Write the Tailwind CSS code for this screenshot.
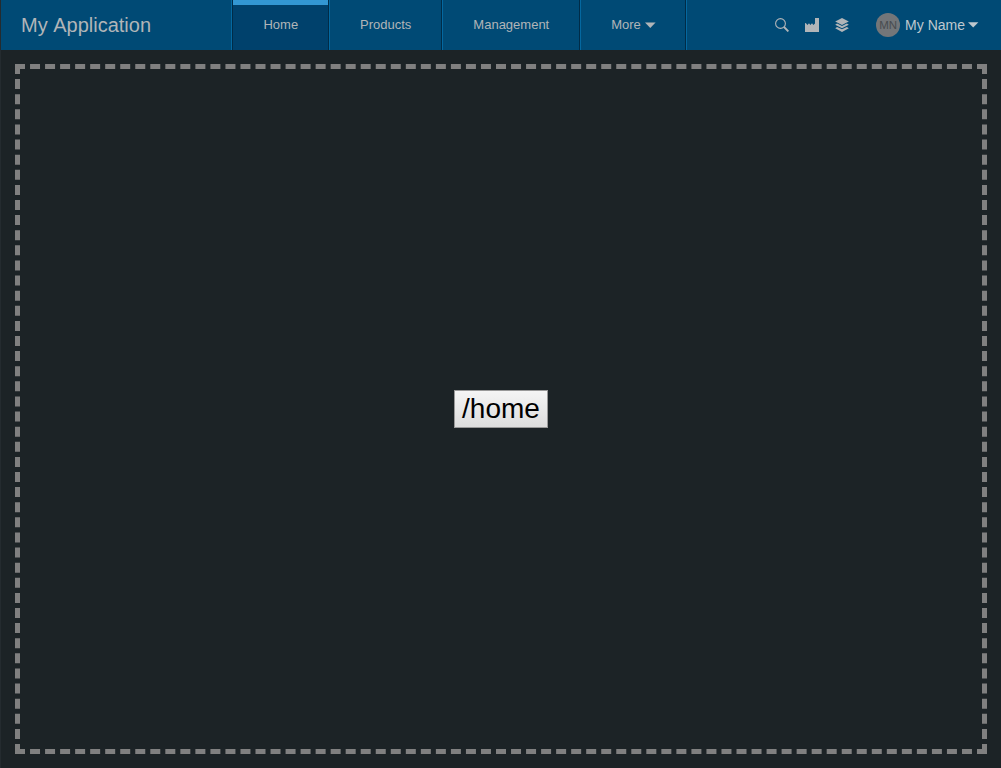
<!DOCTYPE html>
<html lang="en">
<head>
<meta charset="utf-8">
<title>My Application</title>
<script src="https://cdn.jsdelivr.net/npm/@tailwindcss/browser@4"></script>
</head>
<body class="h-screen overflow-hidden bg-[#1c2326] font-['Liberation_Sans',Arial,sans-serif] text-[#b1b5b8]">
<div class="flex h-screen flex-col border-l border-[#242b2f]">
  <header class="flex h-[50px] shrink-0 bg-[#004a75]">
    <div class="flex w-[230px] items-center pl-5 text-[20px] [font-kerning:none]">My Application</div>
    <nav class="flex border-r border-[#0468a0] text-[13px]">
      <a class="flex w-[98px] items-center justify-center border-x border-l-[#0468a0] border-r-[#002c48] bg-[#00416c] pl-[1.6px] shadow-[inset_1px_0_0_#002c48,inset_0_5px_0_#3397d3]">Home</a>
      <a class="flex w-[113px] items-center justify-center border-x border-l-[#0468a0] border-r-[#002c48] pl-[.4px]">Products</a>
      <a class="flex w-[138px] items-center justify-center border-x border-l-[#0468a0] border-r-[#002c48] pl-[.6px]">Management</a>
      <a class="flex w-[106px] items-center justify-center gap-1 border-x border-l-[#0468a0] border-r-[#002c48] pl-px">More
        <svg class="h-[6px] w-[11px]" viewBox="0 0 11 6" fill="currentColor"><path d="M0 .5h10.6L5.3 6z"/></svg>
      </a>
    </nav>
    <div class="ml-auto flex items-center pr-[22px]">
      <div class="mr-[27px] flex gap-4">
        <svg class="size-[14px]" viewBox="0 0 14 14" fill="none" stroke="currentColor"><circle cx="5.5" cy="5.5" r="4.9" stroke-width="1.1"/><path d="M9 9l4.4 4.4" stroke-width="1.9"/></svg>
        <svg class="size-[14px]" viewBox="0 0 14 14" fill="currentColor"><path d="M0 14V5l1 .2L2.4 7 4 5.2 5.4 7 7 5.2 8.4 7 10 5.6V0h4v14z"/></svg>
        <svg class="size-[14px]" viewBox="0 0 14 14" fill="currentColor"><path d="M7 0l6.8 3.5L7 7 .2 3.5z"/><path d="M2.1 5.4L7 7.9l4.9-2.5 1.9 1.4L7 10.3.2 6.8z"/><path d="M2.1 8.9L7 11.3l4.9-2.4 1.9 1.4L7 13.9.2 10.3z"/></svg>
      </div>
      <div class="flex items-center text-[14px] text-[#bfc8ce]">
        <span class="mr-[5px] flex size-6 items-center justify-center rounded-full bg-[#737679] pt-px text-[11.5px] text-[#484c4f]">MN</span>
        <span>My Name</span>
        <svg class="ml-[3px] h-[6px] w-[11px]" viewBox="0 0 11 6" fill="currentColor"><path d="M0 .2h10.4L5.2 5.6z"/></svg>
      </div>
    </div>
  </header>
  <main class="flex min-h-0 flex-1 p-[14px]">
    <div class="flex flex-1 items-center justify-center border-[5px] border-dashed border-[#808080]">
      <div class="flex h-[38px] w-[94px] items-center justify-center border border-[#999] bg-linear-to-b from-[#f5f5f5] to-[#dddddd] text-[28px] text-black">/home</div>
    </div>
  </main>
</div>
</body>
</html>
